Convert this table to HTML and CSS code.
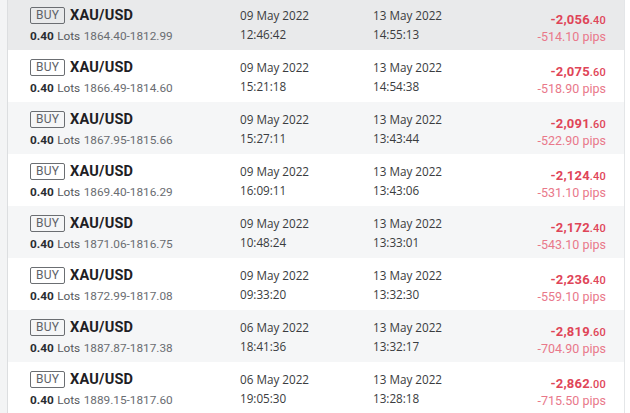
FILE: index.html
```html
<!DOCTYPE html>
<html>
<head>
<meta charset="utf-8">
<link rel="stylesheet" href="styles.css">
</head>
<body>
<div class="page">
  <div class="gutter"></div>
  <div class="list">
    <div class="row hover">
      <div class="sym"><div class="l1"><span class="buy">BUY</span><span class="pair">XAU/USD</span></div><div class="l2"><b>0.40</b> Lots <span class="px">1864.40-1812.99</span></div></div>
      <div class="date"><div>09 May 2022</div><div>12:46:42</div></div>
      <div class="date"><div>13 May 2022</div><div>14:55:13</div></div>
      <div class="pl"><div class="amt">-2,056<small>.40</small></div><div class="pips">-514.10 pips</div></div>
    </div>
    <div class="row">
      <div class="sym"><div class="l1"><span class="buy">BUY</span><span class="pair">XAU/USD</span></div><div class="l2"><b>0.40</b> Lots <span class="px">1866.49-1814.60</span></div></div>
      <div class="date"><div>09 May 2022</div><div>15:21:18</div></div>
      <div class="date"><div>13 May 2022</div><div>14:54:38</div></div>
      <div class="pl"><div class="amt">-2,075<small>.60</small></div><div class="pips">-518.90 pips</div></div>
    </div>
    <div class="row alt">
      <div class="sym"><div class="l1"><span class="buy">BUY</span><span class="pair">XAU/USD</span></div><div class="l2"><b>0.40</b> Lots <span class="px">1867.95-1815.66</span></div></div>
      <div class="date"><div>09 May 2022</div><div>15:27:11</div></div>
      <div class="date"><div>13 May 2022</div><div>13:43:44</div></div>
      <div class="pl"><div class="amt">-2,091<small>.60</small></div><div class="pips">-522.90 pips</div></div>
    </div>
    <div class="row">
      <div class="sym"><div class="l1"><span class="buy">BUY</span><span class="pair">XAU/USD</span></div><div class="l2"><b>0.40</b> Lots <span class="px">1869.40-1816.29</span></div></div>
      <div class="date"><div>09 May 2022</div><div>16:09:11</div></div>
      <div class="date"><div>13 May 2022</div><div>13:43:06</div></div>
      <div class="pl"><div class="amt">-2,124<small>.40</small></div><div class="pips">-531.10 pips</div></div>
    </div>
    <div class="row alt">
      <div class="sym"><div class="l1"><span class="buy">BUY</span><span class="pair">XAU/USD</span></div><div class="l2"><b>0.40</b> Lots <span class="px">1871.06-1816.75</span></div></div>
      <div class="date"><div>09 May 2022</div><div>10:48:24</div></div>
      <div class="date"><div>13 May 2022</div><div>13:33:01</div></div>
      <div class="pl"><div class="amt">-2,172<small>.40</small></div><div class="pips">-543.10 pips</div></div>
    </div>
    <div class="row">
      <div class="sym"><div class="l1"><span class="buy">BUY</span><span class="pair">XAU/USD</span></div><div class="l2"><b>0.40</b> Lots <span class="px">1872.99-1817.08</span></div></div>
      <div class="date"><div>09 May 2022</div><div>09:33:20</div></div>
      <div class="date"><div>13 May 2022</div><div>13:32:30</div></div>
      <div class="pl"><div class="amt">-2,236<small>.40</small></div><div class="pips">-559.10 pips</div></div>
    </div>
    <div class="row alt">
      <div class="sym"><div class="l1"><span class="buy">BUY</span><span class="pair">XAU/USD</span></div><div class="l2"><b>0.40</b> Lots <span class="px">1887.87-1817.38</span></div></div>
      <div class="date"><div>06 May 2022</div><div>18:41:36</div></div>
      <div class="date"><div>13 May 2022</div><div>13:32:17</div></div>
      <div class="pl"><div class="amt">-2,819<small>.60</small></div><div class="pips">-704.90 pips</div></div>
    </div>
    <div class="row">
      <div class="sym"><div class="l1"><span class="buy">BUY</span><span class="pair">XAU/USD</span></div><div class="l2"><b>0.40</b> Lots <span class="px">1889.15-1817.60</span></div></div>
      <div class="date"><div>06 May 2022</div><div>19:05:30</div></div>
      <div class="date"><div>13 May 2022</div><div>13:28:18</div></div>
      <div class="pl"><div class="amt">-2,862<small>.00</small></div><div class="pips">-715.50 pips</div></div>
    </div>
  </div>
</div>
</body>
</html>
```
FILE: styles.css
```css
html, body { margin: 0; padding: 0; background: #ffffff; overflow: hidden; }
.page { display: flex; height: 413px; }
.gutter { width: 7px; background: #f3f4f5; border-right: 1px solid #dcdee0; flex: none; }
.list { flex: 1; margin-top: -2px; margin-right: 5px; border-right: 1px solid #e4e6e8; }
.row {
  height: 52px;
  box-sizing: border-box;
  display: grid;
  grid-template-columns: 210px 133px 1fr auto;
  padding: 0 18px 0 22px;
  background: #ffffff;
}
.row.hover { background: #e9eaeb; }
.row.alt { background: #f5f6f7; }
.sym { padding-top: 9px; font-family: Roboto, "Liberation Sans", sans-serif; }
.l1 { display: flex; align-items: center; height: 17px; }
.buy {
  box-sizing: border-box;
  height: 17px;
  line-height: 15px;
  padding: 0 5px;
  border: 1px solid #6b6e72;
  border-radius: 2px;
  font-size: 12px;
  color: #606368;
  letter-spacing: 0.2px;
}
.pair { margin-left: 5px; font-size: 14.5px; font-weight: 700; color: #1e2024; letter-spacing: 0.2px; }
.l2 { margin-top: 4px; font-size: 11.8px; line-height: 16px; color: #55585c; word-spacing: 0.5px; }
.l2 b { color: #2a2c30; font-weight: 700; }
.px { color: #6a6d72; }
.date {
  padding-top: 8px;
  font-family: "Open Sans", "Noto Sans", sans-serif;
  font-size: 11.7px;
  line-height: 19px;
  color: #3a3c40;
}
.pl { padding-top: 14px; text-align: right; font-family: Roboto, "Liberation Sans", sans-serif; }
.amt { font-size: 13px; font-weight: 700; line-height: 15px; color: #df4558; letter-spacing: 0.2px; }
.amt small { font-size: 11px; font-weight: 500; }
.pips { font-size: 12.5px; line-height: 15px; color: #e9788a; margin-top: 1px; }
```
